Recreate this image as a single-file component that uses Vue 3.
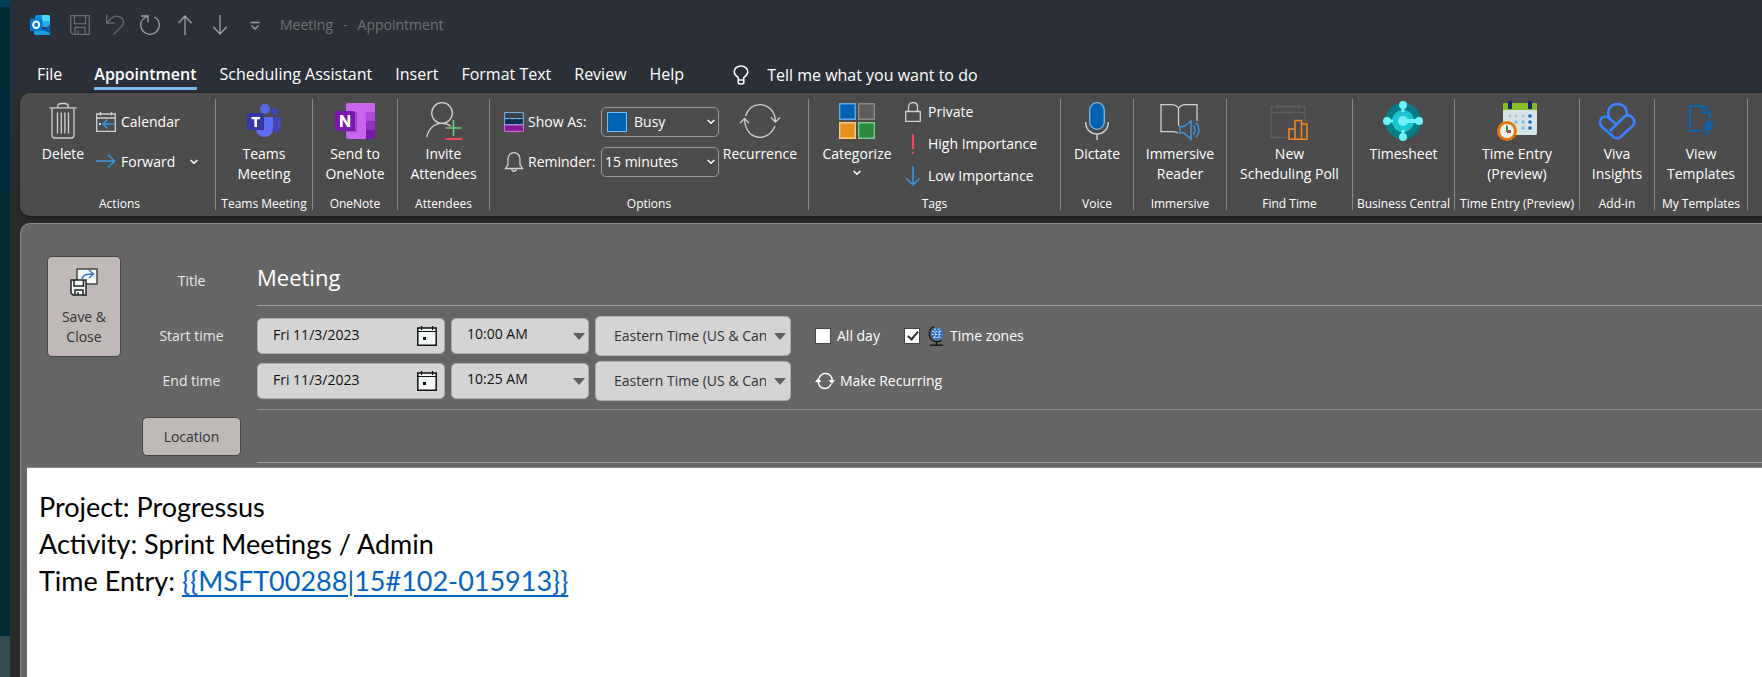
<script setup>
import { ref } from 'vue'

const tabs = ['File', 'Appointment', 'Scheduling Assistant', 'Insert', 'Format Text', 'Review', 'Help']
const activeTab = ref('Appointment')
const subject = ref('Meeting')
const allDay = ref(false)
const timeZones = ref(true)
const rows = ref([
  { id: 'start', label: 'Start time', date: 'Fri 11/3/2023', time: '10:00 AM' },
  { id: 'end', label: 'End time', date: 'Fri 11/3/2023', time: '10:25 AM' }
])
const entryTag = '{{MSFT00288|15#102-015913}}'
</script>

<template>
  <div class="desktop">
    <div class="backdrop"><span class="backdrop-top"></span><span class="backdrop-bottom"></span></div>
    <div class="window">
      <header class="titlebar">
        <svg class="logo" width="20" height="20" viewBox="0 0 20 20" aria-hidden="true">
          <path d="M5 1.5Q5 0 6.500 0H18.500Q20 0 20 1.500V12H5z" fill="#1490df" />
          <path d="M12 0h6.500Q20 0 20 1.500V6h-8z" fill="#50d9ff" /><path d="M5 6h7v6H5z" fill="#0364b8" />
          <path d="M12 6h8v6h-8z" fill="#28a8ea" />
          <path d="M4 11l8 4 8-5v8.500q0 1.500-1.500 1.500H5.500Q4 20 4 18.500z" fill="#1b9de2" />
          <path d="M20 10v8l-8-3z" fill="#0a5ea8" />
          <rect y="3.500" width="12.500" height="12.500" rx="1.200" fill="#0078d4" />
          <ellipse cx="6.200" cy="9.700" rx="3" ry="3.200" fill="none" stroke="#fff" stroke-width="2" />
        </svg>
        <button class="quick" aria-label="Save">
          <svg width="20" height="20" viewBox="0 0 20 20" class="line dim"><path d="M.7.7h18.600v18.600H3L.7 17z M4.500.7v8h11v-8 M5 19v-6.500h10V19 M8 19v-3.500" /></svg>
        </button>
        <button class="quick" aria-label="Undo">
          <svg width="20" height="20" viewBox="0 0 20 20" class="line dim"><path d="M1.700 0v8h8 M1.700 8l5-5c4-3.500 11-1.500 11.800 3.500.3 2-.5 3.500-2 5L8.500 19.500" /></svg>
        </button>
        <button class="quick" aria-label="Redo">
          <svg width="20" height="20" viewBox="0 0 20 20" class="line"><path d="M1 1h7v6.500 M7.500 1.500C3 3 .7 6 .7 10c0 5 4 9.300 9.300 9.300s9.300-4.300 9.300-9.300c0-3.500-2-6.500-5-8" /></svg>
        </button>
        <button class="quick" aria-label="Previous">
          <svg width="20" height="20" viewBox="0 0 20 20" class="line"><path d="M10 20V1 M3.500 8L10 1l6.500 7" /></svg>
        </button>
        <button class="quick" aria-label="Next">
          <svg width="20" height="20" viewBox="0 0 20 20" class="line"><path d="M10 0v19 M3.500 12l6.500 7 6.500-7" /></svg>
        </button>
        <button class="quick" aria-label="Customize toolbar">
          <svg width="20" height="20" viewBox="0 0 20 20" class="line"><path d="M5.500 7.500h9 M6.500 10.500l3.500 3.500 3.500-3.500" /></svg>
        </button>
        <span class="caption"><span>Meeting</span><span>-</span><span>Appointment</span></span>
      </header>

      <nav class="tabs">
        <button v-for="t in tabs" :key="t" class="tab" :class="{ active: t === activeTab }" @click="activeTab = t">{{ t }}</button>
        <button class="tell">
          <svg width="16" height="20" viewBox="0 0 16 20" fill="none" stroke="#fff" stroke-width="1.500"><path d="M5.200 15v-2.500C3 11 1.200 9.500 1.200 7c0-3.500 3-6 6.800-6s6.800 2.500 6.800 6c0 2.500-1.800 4-4 5.500V15z M5.200 15v2.500q0 1.500 2.800 1.500t2.800-1.500V15" /></svg>
          Tell me what you want to do
        </button>
      </nav>

      <section class="ribbon">
        <div class="group g-actions">
          <div class="body">
            <button class="big delete">
              <svg width="28" height="36" viewBox="0 0 28 36" class="ico"><path d="M.5 4.800h27 M8.500 4.500q0-4 4-4h3q4 0 4 4 M3 5v27q0 3 3 3h16q3 0 3-3V5 M8.500 9.500v21 M12.300 9.500v21 M15.900 9.500v21 M19.500 9.500v21" /></svg>
              <span>Delete</span>
            </button>
            <div class="stack wide">
              <button class="small">
                <svg width="20" height="20" viewBox="0 0 20 20" class="ico"><path d="M.7 2h18.600v17.300H.7z M.7 6h18.600 M4.500 0v3.500 M15.500 0v3.500" /><path d="M3 11h2v2H3z" fill="#ddd" stroke="none" /><path d="M7 12h11 M11.500 7.500L7 12l4.500 4.500" stroke="#3a96dd" stroke-width="1.500" /></svg>
                Calendar
              </button>
              <button class="small">
                <svg width="20" height="20" viewBox="0 0 20 20" class="ico"><path d="M0 9h18 M12 2.500L18.500 9 12 15.500" stroke="#3a96dd" stroke-width="1.500" /></svg>
                Forward
                <svg class="drop" width="8" height="6" viewBox="0 0 8 6"><path d="M.7 1L4 4.300 7.300 1" /></svg>
              </button>
            </div>
          </div>
          <div class="name">Actions</div>
        </div>

        <div class="group g-teams">
          <div class="body">
            <button class="big">
              <svg width="36" height="36" viewBox="0 0 36 36">
                <circle cx="29" cy="8.500" r="3.500" fill="#4048b4" /><path d="M24 14h11v10c0 6-7 7-11 3z" fill="#4048b4" />
                <circle cx="19" cy="6" r="5" fill="#5b66e8" /><path d="M10 14h17v11c0 12-17 12-17 0z" fill="#5f6cf6" />
                <rect x="1" y="10" width="17" height="17" rx="1.500" fill="#3439a5" />
                <path d="M5.500 14h8.500v2.300h-3V24H8.400v-7.700H5.500z" fill="#fff" />
              </svg>
              <span>Teams<br>Meeting</span>
            </button>
          </div>
          <div class="name">Teams Meeting</div>
        </div>

        <div class="group g-onenote">
          <div class="body">
            <button class="big">
              <svg width="42" height="36" viewBox="0 0 42 36">
                <rect x="12" width="29" height="36" rx="1.500" fill="#ca64ea" /><path d="M32 9h9v9h-9z" fill="#ae4bd5" /><path d="M32 18h9v9h-9z" fill="#9332bf" /><path d="M32 27h9v7.500q0 1.500-1.500 1.500H32z" fill="#7719aa" />
                <path d="M12 9h11v20H12z" fill="#a34ac4" /><rect x="1" y="8" width="20" height="20" rx="1.500" fill="#7719aa" />
                <path d="M6 24V12h3l4.500 7.500V12h2.700v12h-3l-4.500-7.500V24z" fill="#fff" />
              </svg>
              <span>Send to<br>OneNote</span>
            </button>
          </div>
          <div class="name">OneNote</div>
        </div>

        <div class="group g-attendees">
          <div class="body">
            <button class="big">
              <svg width="36" height="38" viewBox="0 0 36 38" class="ico"><circle cx="16" cy="11" r="10.300" /><path d="M.8 35.500C2 27 8 21.300 16 21.300c3.500 0 6.500 1 9 3" /><path d="M27.500 18v16 M19.500 26h16" stroke="#6ccb7f" stroke-width="1.500" /><path d="M19 37h17" stroke="#e74856" stroke-width="2" /></svg>
              <span>Invite<br>Attendees</span>
            </button>
          </div>
          <div class="name">Attendees</div>
        </div>

        <div class="group g-options">
          <div class="body">
            <div class="stack wide">
              <div class="option">
                <svg width="20" height="20" viewBox="0 0 20 20"><path d="M.6.6h18.800v6H.6z" fill="#3b3f44" stroke="#76b9ed" /><path d="M.6 6.600h18.800v6H.6z" fill="#003966" stroke="#76b9ed" /><path d="M2 12l4-5 M8 12l4-5 M14 12l4-5" stroke="#222" stroke-width="1.500" /><path d="M.6 13h18.800v6.400H.6z" fill="#881798" stroke="#cf79d8" /></svg>
                <label for="show-as">Show As:</label>
                <div class="combo">
                  <span class="swatch"></span>
                  <select id="show-as"><option>Busy</option><option>Free</option></select>
                  <svg class="drop" width="8" height="6" viewBox="0 0 8 6"><path d="M.7 1L4 4.300 7.300 1" /></svg>
                </div>
              </div>
              <div class="option">
                <svg width="20" height="20" viewBox="0 0 20 20" class="ico"><path d="M1.500 16.500h17l-2.500-4V7c0-3.500-2.500-6.300-6-6.300S4 3.500 4 7v5.500z M7.800 17c0 3 4.400 3 4.400 0" /></svg>
                <label for="reminder">Reminder:</label>
                <div class="combo">
                  <select id="reminder"><option>15 minutes</option><option>30 minutes</option></select>
                  <svg class="drop" width="8" height="6" viewBox="0 0 8 6"><path d="M.7 1L4 4.300 7.300 1" /></svg>
                </div>
              </div>
            </div>
            <button class="big recur">
              <svg width="42" height="36" viewBox="0 0 42 36" class="ico"><path d="M6.500 13C9 6 14.500 1.700 21 1.700c8 0 15 6 15.500 17 M32 14.500l4.500 4.500 4.500-4.500 M36 23c-2.500 7-8.500 11.300-15 11.300-8 0-15-6-15.500-18 M1 20l4.500-4.500L10 20" /></svg>
              <span>Recurrence</span>
            </button>
          </div>
          <div class="name">Options</div>
        </div>

        <div class="group g-tags">
          <div class="body">
            <button class="big categorize">
              <svg width="36" height="36" viewBox="0 0 36 36"><g stroke-width="1.400"><path d="M.7.7h15.600v15.600H.7z" fill="#0063b1" stroke="#5ea6e3" /><path d="M19.700.7h15.600v15.600H19.700z" fill="#5d5d5d" stroke="#8a8a8a" /><path d="M.7 19.700h15.600v15.600H.7z" fill="#e3911f" stroke="#f5cc84" /><path d="M19.700 19.700h15.600v15.600H19.700z" fill="#2d8b41" stroke="#77cb86" /></g></svg>
              <span>Categorize</span>
              <svg class="drop" width="8" height="6" viewBox="0 0 8 6"><path d="M.7 1L4 4.300 7.300 1" /></svg>
            </button>
            <div class="stack">
              <button class="small tag">
                <svg width="16" height="20" viewBox="0 0 16 20" class="ico"><path d="M.7 9.500h14.600v9.800H.7z M3.500 9.500V5c0-6 9-6 9 0v4.500" /></svg>
                Private
              </button>
              <button class="small tag">
                <svg width="16" height="20" viewBox="0 0 16 20"><path d="M7 0h2v15H7z M7 18h2v2H7z" fill="#e74856" /></svg>
                High Importance
              </button>
              <button class="small tag">
                <svg width="16" height="20" viewBox="0 0 16 20" class="ico"><path d="M8 0v19 M1.500 12.500L8 19l6.500-6.500" stroke="#3a96dd" stroke-width="1.500" /></svg>
                Low Importance
              </button>
            </div>
          </div>
          <div class="name">Tags</div>
        </div>

        <div class="group g-voice">
          <div class="body">
            <button class="big">
              <svg width="24" height="38" viewBox="0 0 24 38" class="ico"><rect x="4.700" y=".7" width="14.600" height="26.600" rx="7.300" fill="#0063b1" stroke="#76b9ed" /><path d="M.7 20c0 16 22.600 16 22.600 0 M12 32v6" stroke-width="1.500" /></svg>
              <span>Dictate</span>
            </button>
          </div>
          <div class="name">Voice</div>
        </div>

        <div class="group g-immersive">
          <div class="body">
            <button class="big">
              <svg width="40" height="38" viewBox="0 0 40 38" class="ico"><path d="M18 31c-2-1-4-1.300-6.500-1.300H1V2.700h10.500c3 0 5 1 7 3.500 2-2.500 4-3.500 7-3.500H37V19 M18.500 6v18" /><path d="M20 24.500h4L31 19v18l-7-6h-4z M33.500 23.500q3 4 0 9 M36 20.500q6 7.500 0 15" stroke="#3a96dd" stroke-width="1.500" /></svg>
              <span>Immersive<br>Reader</span>
            </button>
          </div>
          <div class="name">Immersive</div>
        </div>

        <div class="group g-poll">
          <div class="body">
            <button class="big">
              <svg width="38" height="38" viewBox="0 0 38 38" class="ico"><path d="M17 35.500H1V4.500h34V19 M1 10.500h34 M8 1v6 M28.500 1v6" stroke="#616161" /><path d="M19 37.200V27h6v10.200 M25 37.200V18.500h6.500v18.700 M31.500 22H37v15.200H18.500" stroke="#f7861f" stroke-width="1.500" /></svg>
              <span>New<br>Scheduling Poll</span>
            </button>
          </div>
          <div class="name">Find Time</div>
        </div>

        <div class="group g-central">
          <div class="body">
            <button class="big">
              <svg width="40" height="40" viewBox="0 0 40 40"><circle cx="20" cy="20" r="18" fill="#067c86" /><circle cx="20" cy="20" r="11" fill="#1ac6d2" /><g fill="#71f1fb"><circle cx="20" cy="20" r="5" /><path d="M20 18h16v4H20z M18.500 4h3v7h-3z M18.500 29h3v7h-3z M4 18.500h6v3H4z" /><circle cx="20" cy="4" r="4" /><circle cx="20" cy="36" r="4" /><circle cx="4" cy="20" r="4" /><circle cx="36" cy="20" r="4" /></g></svg>
              <span>Timesheet</span>
            </button>
          </div>
          <div class="name">Business Central</div>
        </div>

        <div class="group g-entry">
          <div class="body">
            <button class="big">
              <svg width="40" height="40" viewBox="0 0 40 40"><rect x="6" y="2" width="34" height="32" rx="2" fill="#d6e3e8" /><path d="M6 9V4q0-2 2-2h30q2 0 2 2v5z" fill="#86bc25" /><path d="M11 0h4v8h-4z M31 0h4v8h-4z" fill="#1b2a6b" /><g fill="#b5c5cd"><circle cx="13" cy="15" r="1.700" /><circle cx="19" cy="15" r="1.700" /><circle cx="26" cy="15" r="1.700" /></g><g fill="#7fb9e0"><circle cx="19" cy="21" r="1.700" /><circle cx="26" cy="21" r="1.700" /><circle cx="26" cy="27" r="1.700" /></g><g fill="#0f6cbd"><circle cx="33" cy="15" r="1.800" /><circle cx="33" cy="21" r="1.800" /><circle cx="33" cy="27" r="1.800" /></g><circle cx="10" cy="30" r="8.500" fill="#eef3f5" stroke="#e0790c" stroke-width="3" /><path d="M10 24.500v5.500h4" fill="none" stroke="#398d42" stroke-width="2" /><path d="M10 31h4" stroke="#d13438" stroke-width="2" /></svg>
              <span>Time Entry<br>(Preview)</span>
            </button>
          </div>
          <div class="name">Time Entry (Preview)</div>
        </div>

        <div class="group g-viva">
          <div class="body">
            <button class="big">
              <svg width="38" height="38" viewBox="0 0 38 38" fill="none" stroke="#3b82ff" stroke-width="2.600" stroke-linejoin="round"><path d="M10.500 14.500C9 7 13 2 19.500 2S30 7 28.500 14 M18.500 22.500L9.500 15C4 13 0 19 3 24l12.500 11q3.500 2.500 7 0L35 23.500c4-6-3-13-9-8.500L12 29 M18.500 22.500c-4-3.500-7-5-8-8" /></svg>
              <span>Viva<br>Insights</span>
            </button>
          </div>
          <div class="name">Add-in</div>
        </div>

        <div class="group g-templates">
          <div class="body">
            <button class="big">
              <svg width="26" height="34" viewBox="0 0 26 34" fill="none" stroke="#0f64ad" stroke-width="2"><path d="M13 27H2V2h13l7 7v6 M14.500 2v7H22" /><path d="M19 17h6l-2 5h3l-9 12 2-8h-4z" fill="#0f64ad" stroke="none" /></svg>
              <span>View<br>Templates</span>
            </button>
          </div>
          <div class="name">My Templates</div>
        </div>
      </section>

      <main class="panel">
        <form class="form" @submit.prevent>
          <button class="plain save">
            <svg width="28" height="28" viewBox="0 0 28 28" stroke-width="1.500"><path d="M7 1h20v15H7z" fill="#f4f8f8" stroke="#444" /><path d="M12 11c1-4 4-5 11-5 M19 2l4.500 4-4.500 4" fill="none" stroke="#2f78c8" /><path d="M1 12h15v15H3l-2-2z" fill="#f4f8f8" stroke="#222" /><path d="M4 12v6h9.500v-6 M5 27v-5h8v5 M8 27v-3" fill="none" stroke="#222" /></svg>
            <span>Save &amp;<br>Close</span>
          </button>
          <div class="fields">
            <label class="label" for="title">Title</label>
            <input id="title" v-model="subject" class="title" type="text">

            <template v-for="row in rows" :key="row.id">
              <label class="label timelabel" :for="row.id + '-date'">{{ row.label }}</label>
              <div class="times" :class="row.id">
                <div class="box date">
                  <input :id="row.id + '-date'" v-model="row.date" type="text">
                  <svg class="cal" width="20" height="20" viewBox="0 0 20 20"><path d="M.8 2h18.400v17.200H.8z" fill="#f4f8f8" stroke="#111" stroke-width="1.500" /><path d="M1 5.500h18 M4.500 0v4 M15.500 0v4" stroke="#111" stroke-width="1.200" /><path d="M6 11h3v3H6z" fill="#111" /></svg>
                </div>
                <div class="box time">
                  <select v-model="row.time" :aria-label="row.label"><option>{{ row.time }}</option></select>
                  <svg class="caret" width="12" height="7" viewBox="0 0 12 7"><path d="M0 0h12L6 7z" /></svg>
                </div>
                <div class="box zone">
                  <select :aria-label="row.label + ' zone'"><option>Eastern Time (US &amp; Canada)</option></select>
                  <svg class="caret" width="12" height="7" viewBox="0 0 12 7"><path d="M0 0h12L6 7z" /></svg>
                </div>
                <div v-if="row.id === 'start'" class="extras">
                  <label class="check"><input v-model="allDay" type="checkbox">All day</label>
                  <label class="check"><input v-model="timeZones" type="checkbox">
                    <svg width="16" height="20" viewBox="0 0 16 20"><circle cx="9" cy="8" r="6.300" fill="#2f6fc0" /><path d="M4 5.500h10 M3.500 8.500h11 M5 11.500h8 M7 2.500v11 M11 2.500v11" stroke="#d9ebfb" stroke-dasharray="2 1.500" /><path d="M6 .8C-1 3 0 16 9 15.700q3 0 4.500-1.500 M8.500 16v3 M2 19.200h13" fill="none" stroke="#161616" stroke-width="1.500" /></svg>
                    Time zones</label>
                </div>
                <div v-else class="extras">
                  <button class="recurring">
                    <svg width="20" height="18" viewBox="0 0 20 18" fill="none" stroke="#fff" stroke-width="1.500"><path d="M4 6.500C5 3.500 7.500 1.500 10.500 1.500c4 0 6.700 3 6.700 7.500 M16 12c-1.200 2.800-3.500 4.500-6 4.500-4 0-6.800-3-6.800-7.500" /><path d="M13.500 8h6.500l-3 4z M0 10h6.500l-3.300-4z" fill="#fff" stroke="none" /></svg>
                    Make Recurring
                  </button>
                </div>
              </div>
            </template>

            <button class="plain location">Location</button>
            <input class="place" type="text" aria-label="Location">
          </div>
        </form>
        <article class="note">
          <p>Project: Progressus</p>
          <p>Activity: Sprint Meetings / Admin</p>
          <p>Time Entry: <a href="#">{{ entryTag }}</a></p>
        </article>
      </main>
    </div>
  </div>
</template>

<style>
body { margin: 0; background: #2b2b2b; }
</style>

<style scoped>
* { box-sizing: border-box; }
.desktop { display: flex; min-height: 100vh; overflow: hidden; font-family: "Open Sans", "Noto Sans", sans-serif; font-size: 14px; line-height: 20px; color: #fff; }
button, input, select { font: inherit; color: inherit; margin: 0; }
button { border: 0; padding: 0; background: none; white-space: nowrap; }
svg { flex: none; display: block; }
.backdrop { flex: none; width: 10px; display: flex; flex-direction: column; justify-content: space-between; background: #002b36; }
.backdrop-top { height: 7px; background: #004255; }
.backdrop-bottom { height: 41px; background: #344c54; }
.window { flex: 1; min-width: 0; display: flex; flex-direction: column; background: linear-gradient(#2b3038 92px, #2b3033 93px, #2b2b2b 216px); }

.titlebar { display: flex; align-items: center; height: 50px; padding-left: 20px; }
.logo { margin-right: 20px; }
.quick { margin-right: 15px; }
.line { fill: none; stroke: #a0a0a0; stroke-width: 1.3; }
.line.dim { stroke: #6a6a6a; }
.caption { display: flex; gap: 10px; color: #717171; }

.tabs { display: flex; height: 43px; padding-left: 27px; font-size: 16px; }
.tab { height: 40px; padding-top: 12px; margin-right: 23px; line-height: 25px; border-bottom: 3px solid transparent; }
.tab:first-child { margin-right: 32px; }
.tab.active { font-weight: 600; border-color: #76b9ed; }
.tell { display: flex; align-items: center; gap: 18px; height: 40px; margin-left: 26px; padding-top: 10px; }

.ribbon { display: flex; margin-left: 10px; padding: 6px 0; border-radius: 10px 0 0 10px; background: #4c4c4c; box-shadow: 0 1px 4px #151515; }
.group { flex: none; display: flex; flex-direction: column; height: 111px; border-right: 1px solid #8a8a8a; }
.body { flex: 1; display: flex; justify-content: center; }
.name { font-size: 12px; line-height: 12px; text-align: center; white-space: nowrap; }
.g-actions { width: 196px; } .g-teams { width: 97px; } .g-onenote { width: 85px; } .g-attendees { width: 92px; }
.g-options { width: 319px; } .g-tags { width: 252px; } .g-voice { width: 73px; } .g-immersive { width: 93px; }
.g-poll { width: 126px; } .g-central { width: 102px; } .g-entry { width: 125px; } .g-viva { width: 75px; } .g-templates { width: 93px; }
.g-actions .body, .g-options .body, .g-tags .body { justify-content: flex-start; }
.g-actions .name { padding-left: 4px; }
.big { display: flex; flex-direction: column; align-items: center; padding-top: 2px; }
.big > svg:first-child { height: 40px; margin-bottom: 3px; }
.ico { fill: none; stroke: #d0d0d0; stroke-width: 1.3; }
.delete { width: 56px; margin-left: 15px; }
.stack { display: flex; flex-direction: column; align-items: flex-start; padding-top: 3px; gap: 12px; }
.stack.wide { padding-top: 8px; gap: 10px; }
.small { display: flex; align-items: center; gap: 5px; height: 30px; }
.small .drop { margin-left: 10px; }
.tag { height: 20px; gap: 7px; }
.drop { fill: none; stroke: #fff; stroke-width: 1.5; }
.g-actions .stack { margin-left: 5px; }
.g-options .stack { margin-left: 14px; }
.option { display: grid; grid-template-columns: 20px 69px 118px; column-gap: 4px; align-items: center; white-space: nowrap; }
.combo { display: flex; align-items: center; height: 30px; border: 1px solid #999; border-radius: 5px; padding-right: 3px; }
.combo select { flex: 1; min-width: 0; appearance: none; border: 0; background: none; padding: 0 0 0 3px; }
.combo option { color: #000; }
.swatch { width: 20px; height: 20px; margin: 0 4px 0 5px; background: #0063b1; border: 1px solid #76b9ed; }
.recur { width: 82px; }
.categorize { width: 80px; margin: 0 8px; }
.categorize .drop { margin-top: 6px; }

.panel { flex: 1; display: flex; flex-direction: column; margin: 7px 0 0 10px; border: solid #8a8a8a; border-width: 1px 0 0 1px; border-radius: 10px 0 0 0; background: #666; }
.form { display: flex; gap: 21px; align-items: flex-start; padding: 32px 0 4px 26px; }
.plain { color: #333; background: #bfbab7; border: 1px solid #444; border-radius: 5px; }
.save { flex: none; width: 74px; height: 101px; display: flex; flex-direction: column; align-items: center; gap: 11px; padding-top: 11px; }
.fields { flex: 1; min-width: 0; display: grid; grid-template-columns: 99px 1fr; column-gap: 16px; }
.label { text-align: center; color: #e8e8e8; line-height: 50px; }
.title, .place { width: 100%; border: 0; border-bottom: 1px solid #a0a0a0; background: none; outline: none; padding: 0; }
.title { height: 50px; font-size: 22px; padding-bottom: 8px; margin-bottom: 10px; }
.timelabel { line-height: 40px; }
.times { display: flex; align-items: center; gap: 6px; height: 40px; margin-bottom: 5px; }
.times.end { height: 49px; padding-bottom: 8px; margin: 0; border-bottom: 1px solid #8a8a8a; }
.box { flex: none; display: flex; align-items: center; height: 36px; border: 1px solid #aaa; border-radius: 5px; background: #d4d4d4; color: #111; }
.box input, .box select { flex: 1; min-width: 0; height: 34px; appearance: none; border: 0; background: none; outline: none; padding: 0 0 4px 15px; }
.date { width: 188px; padding-right: 7px; }
.time { width: 138px; padding-right: 3px; }
.zone { width: 196px; height: 40px; padding-right: 4px; color: #333; }
.zone select { padding: 0 0 0 18px; margin-right: 8px; }
.caret { fill: #606060; }
.extras { display: flex; align-items: center; gap: 24px; margin-left: 18px; white-space: nowrap; }
.check { display: flex; align-items: center; gap: 6px; }
.check input { appearance: none; width: 16px; height: 16px; margin: 0; background: #fff; border: 1px solid #444; }
.check input:checked::before { content: ""; display: block; width: 4px; height: 9px; margin: 0 0 0 5px; border: solid #333; border-width: 0 2px 2px 0; transform: rotate(40deg); }
.check svg { margin-left: 2px; }
.recurring { display: flex; align-items: center; gap: 5px; }
.location { height: 39px; margin-top: 7px; }
.place { height: 53px; }
.note { flex: 1; margin-left: 6px; border-top: 1px solid #8a8a8a; padding: 20px 12px; background: #fff; color: #000; font-family: Lato, sans-serif; font-size: 27px; line-height: 37px; }
.note p { margin: 0; }
.note a { color: #0563c1; text-underline-offset: 4px; text-decoration-thickness: 2px; }
</style>
